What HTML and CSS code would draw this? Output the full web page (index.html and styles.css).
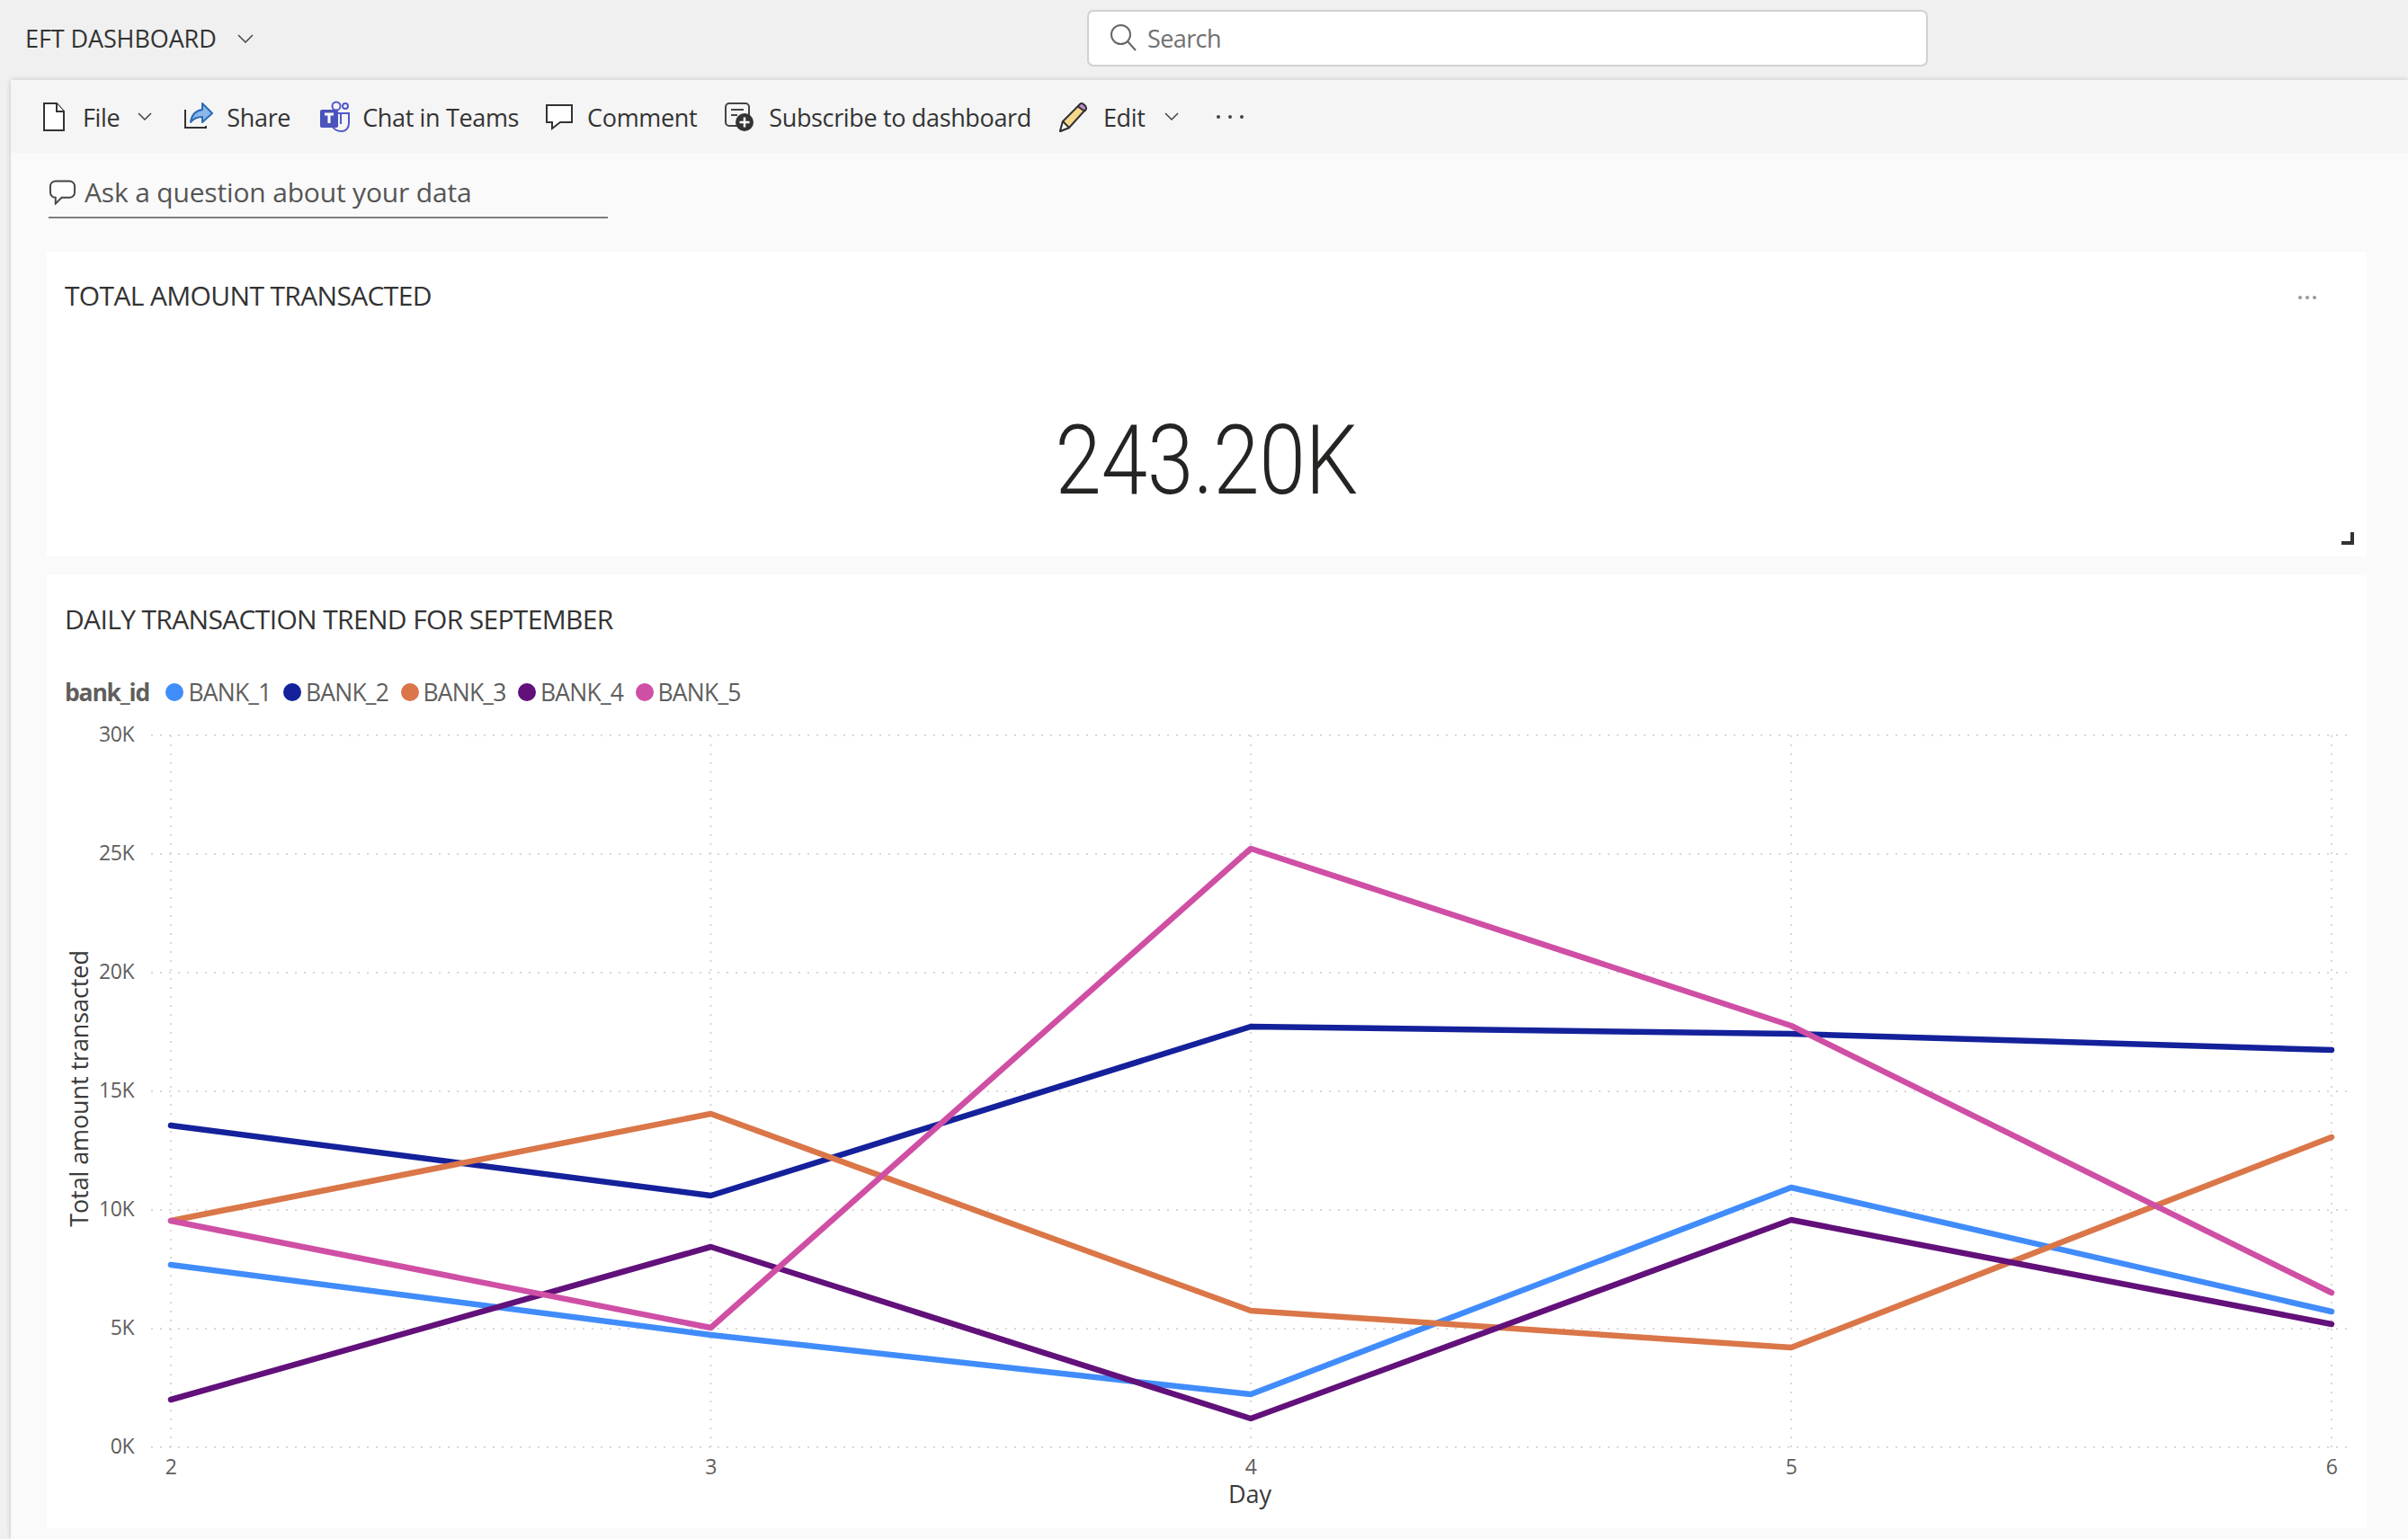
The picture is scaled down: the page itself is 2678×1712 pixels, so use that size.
FILE: index.html
```html
<!DOCTYPE html>
<html lang="en">
<head>
<meta charset="utf-8">
<title>EFT DASHBOARD</title>
<link rel="stylesheet" href="styles.css">
</head>
<body>
<header class="topbar">
  <div class="report-name"><span>EFT DASHBOARD</span>
    <svg class="chev-lg" viewBox="0 0 18 10"><path d="M1 1l8 8 8-8"/></svg>
  </div>
  <div class="search">
    <svg class="search-icon" viewBox="0 0 30 30"><circle cx="12.500" cy="11.500" r="10.500"/><path d="M20 19l9 10"/></svg>
    <span>Search</span>
  </div>
</header>
<main class="panel">
  <nav class="toolbar">
    <div class="tb tb-file">
      <svg class="ic ic-file" viewBox="0 0 24 32"><path class="doc" d="M1 1h14l8 9v21H1z"/><path class="doc" d="M15 1v9h8"/></svg>
      <span>File</span>
      <svg class="chev" viewBox="0 0 16 9"><path d="M1 1l7 7 7-7"/></svg>
    </div>
    <div class="tb tb-share">
      <svg class="ic ic-share" viewBox="0 0 32 32"><path class="tray" d="M1 8v20h23v-2"/><path class="arrow" d="M20 1l11 11-11 10v-6c-6 0-10 2-13 6 1-8 6-13 13-14z"/></svg>
      <span>Share</span>
    </div>
    <div class="tb tb-teams">
      <svg class="ic ic-teams" viewBox="0 0 34 34"><circle class="t-line" cx="18" cy="5" r="4.500"/><circle class="t-line" cx="28" cy="5" r="3"/><path class="t-line" d="M11 13h21v11c0 5-3 9-8 9-5 0-9-2-11-7"/><path class="t-line" d="M23 13v12"/><rect class="t-box" x="0" y="9" width="20" height="20" rx="2"/><path class="t-t" d="M5 14h10M10 14v10"/></svg>
      <span>Chat in Teams</span>
    </div>
    <div class="tb tb-comment">
      <svg class="ic ic-comment" viewBox="0 0 30 32"><path d="M1 3h28v19H16l-9 7v-7H1z"/></svg>
      <span>Comment</span>
    </div>
    <div class="tb tb-sub">
      <svg class="ic ic-sub" viewBox="0 0 32 32"><path class="sub-line" d="M22 26H5a4 4 0 0 1-4-4V5a4 4 0 0 1 4-4h18a4 4 0 0 1 4 4v12"/><path class="sub-line" d="M7 8h14M7 14h7"/><circle class="sub-dot" cx="22" cy="22" r="10"/><path class="sub-plus" d="M22 16.500v11M16.500 22h11"/></svg>
      <span>Subscribe to dashboard</span>
    </div>
    <div class="tb tb-edit">
      <svg class="ic ic-pencil" viewBox="0 0 32 34"><path class="pen-body" d="M24 3l7 5-19 21-10 4 3-11z"/><path class="pen-tip" d="M5 22l7 7-10 4z"/><path class="pen-end" d="M24 3c2-2.500 7 1 7 5-.5 1-1 2-2 2.500l-7-5z"/></svg>
      <span>Edit</span>
      <svg class="chev" viewBox="0 0 16 9"><path d="M1 1l7 7 7-7"/></svg>
    </div>
    <div class="tb-more" aria-label="More"><i></i><i></i><i></i></div>
  </nav>
  <section class="content">
    <div class="qna">
      <svg class="qna-icon" viewBox="0 0 30 28"><path d="M7 1h16a6 6 0 0 1 6 6v7a6 6 0 0 1-6 6H14l-7 7v-7a6 6 0 0 1-6-6V7a6 6 0 0 1 6-6z"/></svg>
      <span>Ask a question about your data</span>
    </div>
    <article class="card card-kpi">
      <div class="card-head">
        <h2 class="card-title">TOTAL AMOUNT TRANSACTED</h2>
        <div class="card-more"><i></i><i></i><i></i></div>
      </div>
      <div class="kpi"><span class="kpi-value">243.20K</span></div>
      <div class="resize-mark"></div>
    </article>
    <article class="card card-chart">
      <h2 class="card-title">DAILY TRANSACTION TREND FOR SEPTEMBER</h2>
      <div class="legend">
        <b>bank_id</b>
        <span class="lg"><i class="d1"></i>BANK_1</span>
        <span class="lg"><i class="d2"></i>BANK_2</span>
        <span class="lg"><i class="d3"></i>BANK_3</span>
        <span class="lg"><i class="d4"></i>BANK_4</span>
        <span class="lg"><i class="d5"></i>BANK_5</span>
      </div>
      <svg class="chart" viewBox="52 800 2580 900">
        <g class="grid">
          <path d="M168 818H2610M168 950H2610M168 1082H2610M168 1214H2610M168 1346H2610M168 1478H2610M168 1610H2610"/>
          <path d="M190 818V1612M790.500 818V1612M1391 818V1612M1992 818V1612M2593 818V1612"/>
        </g>
        <g class="ticks-y">
          <text x="149" y="825">30K</text>
          <text x="149" y="957">25K</text>
          <text x="149" y="1089">20K</text>
          <text x="149" y="1221">15K</text>
          <text x="149" y="1353">10K</text>
          <text x="149" y="1485">5K</text>
          <text x="149" y="1617">0K</text>
        </g>
        <g class="ticks-x">
          <text x="190" y="1640">2</text>
          <text x="790.500" y="1640">3</text>
          <text x="1391" y="1640">4</text>
          <text x="1992" y="1640">5</text>
          <text x="2593" y="1640">6</text>
        </g>
        <text class="axis-title" x="1390" y="1672">Day</text>
        <text class="axis-title" transform="translate(98 1211) rotate(-90)">Total amount transacted</text>
        <polyline class="ln l1" points="190,1407 790.500,1485 1391,1551 1992,1321 2593,1459"/>
        <polyline class="ln l2" points="190,1252 790.500,1330 1391,1142 1992,1150 2593,1168"/>
        <polyline class="ln l3" points="190,1358 790.500,1239 1391,1458 1992,1499 2593,1265"/>
        <polyline class="ln l4" points="190,1557 790.500,1387 1391,1578 1992,1357 2593,1473"/>
        <polyline class="ln l5" points="190,1358 790.500,1477 1391,944 1992,1141 2593,1438"/>
      </svg>
    </article>
  </section>
</main>
</body>
</html>
```

FILE: styles.css
```css
* { box-sizing: border-box; }
html, body { margin: 0; }
body {
  width: 2678px;
  height: 1712px;
  overflow: hidden;
  background: #f0f0f0;
  color: #333;
  font-family: "Open Sans", "Noto Sans", sans-serif;
}
.topbar {
  height: 89px;
  display: flex;
  align-items: center;
  padding-left: 28px;
}
.report-name {
  display: flex;
  align-items: center;
  gap: 23px;
  width: 1181px;
  margin-top: -4px;
  font-size: 27px;
  letter-spacing: -.1px;
  color: #333;
}
.chev-lg { width: 18px; height: 10px; }
.chev-lg path, .chev path { fill: none; stroke: #444; stroke-width: 1.500; }
.search {
  width: 935px;
  height: 63px;
  margin-top: -5px;
  display: flex;
  align-items: center;
  gap: 12px;
  padding-left: 23px;
  background: #fff;
  border: 2px solid #d1d1d1;
  border-radius: 7px;
  font-size: 27px;
  letter-spacing: -.6px;
  color: #707070;
}
.search-icon { width: 30px; height: 30px; }
.search-icon circle, .search-icon path { fill: none; stroke: #666; stroke-width: 2; }
.panel {
  margin-left: 12px;
  height: 1623px;
  background: #fafafa;
  box-shadow: 0 0 6px rgba(0,0,0,.18);
}
.toolbar {
  height: 81px;
  background: #f5f5f5;
  display: flex;
  align-items: center;
  padding-left: 36px;
  font-size: 27px;
  letter-spacing: -.35px;
  color: #333;
}
.tb { display: flex; align-items: center; gap: 18px; }
.tb span { margin-top: 1px; }
.ic { display: block; overflow: visible; }
.ic-file { width: 24px; height: 32px; }
.doc { fill: #fff; stroke: #333; stroke-width: 2; }
.chev { width: 16px; height: 9px; }
.tb-file { margin-right: 36px; gap: 20px; }
.tb-share { margin-right: 33px; gap: 15px; }
.tb-teams { margin-right: 30px; gap: 13px; }
.tb-comment { margin-right: 31px; gap: 16px; }
.tb-sub { margin-right: 30px; gap: 17px; }
.tb-edit { margin-right: 42px; gap: 18px; }
.tb-edit .chev { margin-left: 3px; }
.ic-share { width: 32px; height: 32px; }
.tray { fill: none; stroke: #333; stroke-width: 2; }
.arrow { fill: #8ab8e8; stroke: #2b6cb8; stroke-width: 2; stroke-linejoin: round; }
.ic-teams { width: 34px; height: 34px; }
.t-line { fill: none; stroke: #5059c9; stroke-width: 2; }
.t-box { fill: #4b53bc; }
.t-t { fill: none; stroke: #fff; stroke-width: 3; }
.ic-comment { width: 30px; height: 32px; }
.ic-comment path { fill: #fff; stroke: #333; stroke-width: 2; }
.ic-sub { width: 32px; height: 32px; }
.sub-line { fill: none; stroke: #444; stroke-width: 2; }
.sub-dot { fill: #333; }
.sub-plus { fill: none; stroke: #fff; stroke-width: 2.500; }
.ic-pencil { width: 32px; height: 34px; }
.pen-body { fill: #f5d88a; stroke: #333; stroke-width: 2; stroke-linejoin: round; }
.pen-tip { fill: #fff; stroke: #333; stroke-width: 2; stroke-linejoin: round; }
.pen-end { fill: #c58bd6; stroke: #333; stroke-width: 2; }
.tb-more { display: flex; gap: 9px; }
.tb-more i { width: 4px; height: 4px; border-radius: 50%; background: #444; }
.content { padding: 0 46px 0 40px; }
.qna {
  width: 622px;
  height: 73px;
  margin-left: 2px;
  display: flex;
  align-items: center;
  gap: 10px;
  padding: 16px 0 0 1px;
  border-bottom: 2px solid #7f7f7f;
  font-size: 30px;
  letter-spacing: -.17px;
  color: #555;
}
.qna-icon { width: 29px; height: 28px; }
.qna-icon path { fill: #fff; stroke: #444; stroke-width: 2; }
.card { background: #fff; position: relative; }
.card-title {
  margin: 0;
  font-size: 30px;
  font-weight: 400;
  letter-spacing: -.65px;
  line-height: 38px;
  color: #333;
}
.card-kpi {
  margin-top: 37px;
  height: 339px;
  padding: 30px 20px 0;
}
.card-head { display: flex; justify-content: space-between; align-items: center; }
.card-more { display: flex; gap: 4px; margin: 3px 36px 0 0; }
.card-more i { width: 4px; height: 4px; border-radius: 50%; background: #999; }
.kpi { display: flex; justify-content: center; margin-top: 102px; }
.kpi-value {
  font-family: Roboto, sans-serif;
  font-weight: 300;
  font-size: 108px;
  line-height: 124px;
  color: #252423;
  transform: scaleX(.855);
}
.resize-mark {
  position: absolute;
  right: 14px;
  bottom: 13px;
  width: 14px;
  height: 14px;
  border-right: 4px solid #333;
  border-bottom: 4px solid #333;
}
.card-chart {
  margin-top: 21px;
  height: 1060px;
  padding-top: 30px;
}
.card-chart .card-title { padding-left: 20px; }
.legend {
  height: 30px;
  margin-top: 47px;
  padding-left: 20px;
  display: flex;
  align-items: center;
  gap: 13.500px;
  font-size: 26.500px;
  letter-spacing: -.8px;
  color: #605e5c;
}
.legend b { font-weight: 700; letter-spacing: -1.200px; margin-right: 5px; }
.lg { display: flex; align-items: center; gap: 5px; }
.lg i { width: 20px; height: 20px; border-radius: 50%; }
.d1 { background: #418cfb; }
.d2 { background: #14219b; }
.d3 { background: #da7648; }
.d4 { background: #62107a; }
.d5 { background: #cf4fa5; }
.chart { width: 2580px; height: 900px; display: block; margin-top: 15px; }
.grid path { fill: none; stroke: #d8d8d8; stroke-width: 2; stroke-dasharray: 2 8; }
.ticks-y text, .ticks-x text { font-size: 23px; letter-spacing: -.5px; fill: #605e5c; }
.ticks-y text { text-anchor: end; }
.ticks-x text { text-anchor: middle; }
.axis-title { font-size: 27px; letter-spacing: -.1px; text-anchor: middle; fill: #3a3a3a; }
.ln { fill: none; stroke-width: 6.500; stroke-linecap: round; stroke-linejoin: round; }
.l1 { stroke: #418cfb; }
.l2 { stroke: #14219b; }
.l3 { stroke: #da7648; }
.l4 { stroke: #62107a; }
.l5 { stroke: #cf4fa5; }
```
